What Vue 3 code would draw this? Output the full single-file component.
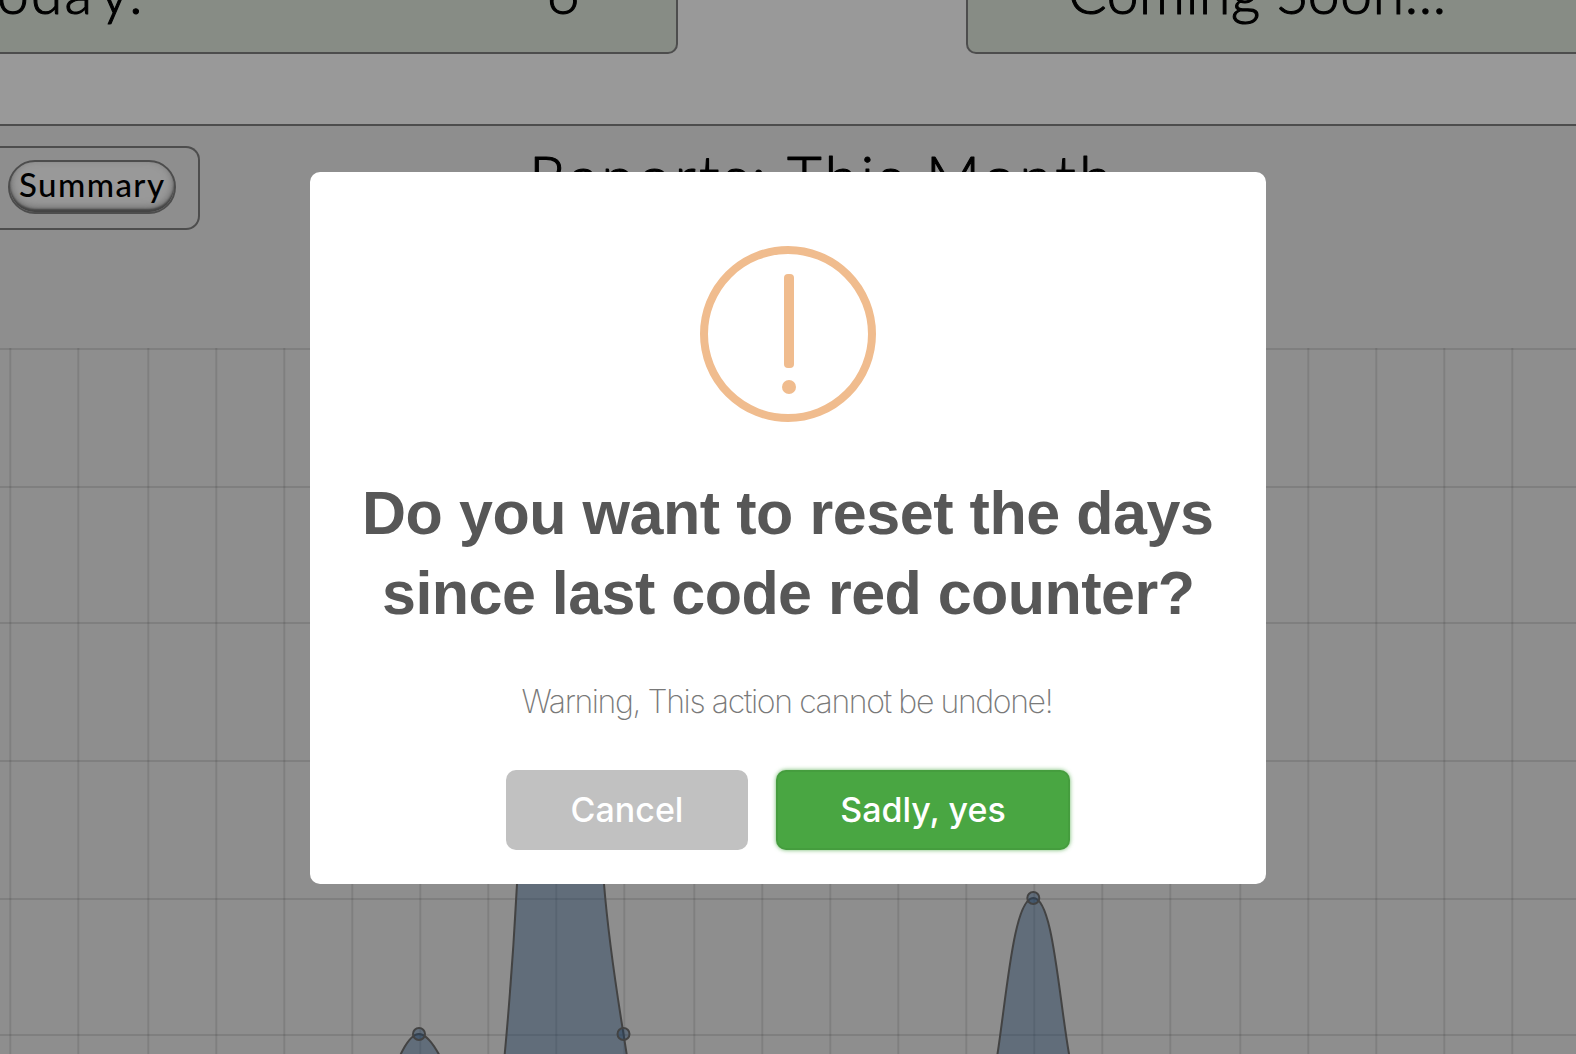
<script setup>
const xs = []
for (let i = 0; i < 23; i++) xs.push(2 * Math.round((10.5 + i * 68.25) / 2) + 0.3)
const ys = [349, 487, 623, 761, 899, 1035]
const points = [[419, 1034], [623.5, 1034], [1033.3, 898]]
</script>

<template>
  <div class="page">
    <section class="stats">
      <div class="card left"><svg width="678" height="52"><text x="-36 -3 31 64.5 100 129" y="13.5">Today:</text><text x="546.5" y="13.5">6</text></svg></div>
      <div class="card right"><svg width="610" height="52"><text x="100" y="13.5" textLength="378">Coming Soon...</text></svg></div>
    </section>
    <section class="reports">
      <header class="bar">
        <div class="tabs"><button class="tab"><svg width="164" height="48"><text x="9" y="33.500" textLength="145">Summary</text></svg></button></div>
        <svg class="title" width="600" height="80"><text x="0" y="73" textLength="583">Reports: This Month</text></svg>
      </header>
      <svg class="chart" width="1576" height="708" viewBox="0 346 1576 708">
        <g class="grid">
          <line v-for="x in xs" :key="x" :x1="x" :x2="x" y1="348" y2="1054" />
          <line v-for="y in ys" :key="y" x1="0" x2="1576" :y1="y" :y2="y" />
        </g>
        <path class="area" d="M386 1090C398 1058 408 1034 419 1034S442 1058 456 1090" />
        <path class="area" d="M498 1120C508 1030 513 960 517 884C528 700 538 640 555 640S594 760 604 884C609 945 618 1000 623.500 1034L637 1120" />
        <path class="area" d="M988 1110L997.500 1054C1007 992 1014 898 1033.300 898S1058 990 1069 1054L1078 1110" />
        <circle v-for="p in points" :key="p[0]" class="area" :cx="p[0]" :cy="p[1]" r="6" />
      </svg>
    </section>

    <div class="overlay">
      <div class="modal">
        <div class="icon"><span class="stem"></span><span class="dot"></span></div>
        <h2><svg width="956" height="160"><text x="52" y="60" textLength="852">Do you want to reset the days</text><text x="72" y="140" textLength="813">since last code red counter?</text></svg></h2>
        <p><svg width="956" height="50"><text x="211.500" y="35" textLength="532">Warning, This action cannot be undone!</text></svg></p>
        <div class="actions">
          <button class="cancel">Cancel</button>
          <button class="confirm">Sadly, yes</button>
        </div>
      </div>
    </div>
  </div>
</template>

<style>
body { margin: 0; overflow: hidden; }
</style>
<style scoped>
* { box-sizing: border-box; }
svg { display: block; }
.page { position: relative; width: 1576px; height: 1054px; overflow: hidden; background: #999; font-family: Lato, sans-serif; }
.stats { height: 124px; display: flex; justify-content: space-between; align-items: flex-start; }
.card { height: 54px; background: #878c85; border: 2px solid #4d4d4d; border-top: 0; overflow: hidden; }
.card text, .title text { font-weight: 300; stroke: #000; stroke-width: 1.1px; stroke-linejoin: round; }
.card text { font-size: 57px; }
.left { width: 678px; border-left: 0; border-radius: 0 0 10px 0; }
.right { width: 610px; border-right: 0; border-radius: 0 0 0 10px; }
.reports { height: 930px; border-top: 2px solid #4d4d4d; background: #8e8e8e; }
.bar { height: 220px; display: flex; align-items: flex-start; }
.tabs { width: 200px; height: 84px; margin-top: 20px; padding: 12px 0 0 8px; border: 2px solid #4d4d4d; border-left: 0; border-radius: 0 14px 14px 0; }
.tab { width: 168px; height: 54px; padding: 0; border: 2px solid #4d4d4d; border-radius: 27px; background: #999; box-shadow: inset 0 -3px 2px #444, inset 0 -4px 9px #666; overflow: hidden; }
.tab text { font: 500 33px Lato, sans-serif; }
.title { margin-left: 329px; }
.title text { font-size: 60px; }
.grid line { stroke: rgba(0, 0, 0, .1); stroke-width: 2; }
.area { fill: rgba(30, 60, 92, .4); stroke: #434343; stroke-width: 2; }
.overlay { position: absolute; inset: 172px 310px 170px; }
.modal { width: 956px; height: 712px; border-radius: 10px; background: #fff; display: flex; flex-direction: column; align-items: center; padding-top: 74px; }
.icon { width: 176px; height: 176px; flex: none; border: 8px solid #f0bc8e; border-radius: 50%; display: flex; flex-direction: column; align-items: center; padding: 20px 0 0 2px; }
.stem { width: 10px; height: 94px; border-radius: 4px; background: #f0bc8e; }
.dot { width: 14px; height: 14px; margin-top: 12px; border-radius: 50%; background: #f0bc8e; }
h2 { margin: 52px 0 0; height: 160px; }
h2 text { font: 700 61px "Liberation Sans", Arial, sans-serif; fill: #575757; }
p { margin: 44px 0 0; height: 50px; }
p text { font: 200 32px Inter, sans-serif; fill: #797979; }
.actions { display: flex; gap: 28px; margin-top: 42px; }
.actions button { height: 80px; padding: 0 0 2px; border: 0; border-radius: 10px; color: #fff; font: 500 34px Inter, sans-serif; }
.actions .cancel { width: 242px; background: #c1c1c1; }
.actions .confirm { width: 294px; background: #49a642; box-shadow: 0 0 4px rgba(73, 166, 66, .8), inset 0 0 0 2px rgba(0, 0, 0, .05); }
</style>
